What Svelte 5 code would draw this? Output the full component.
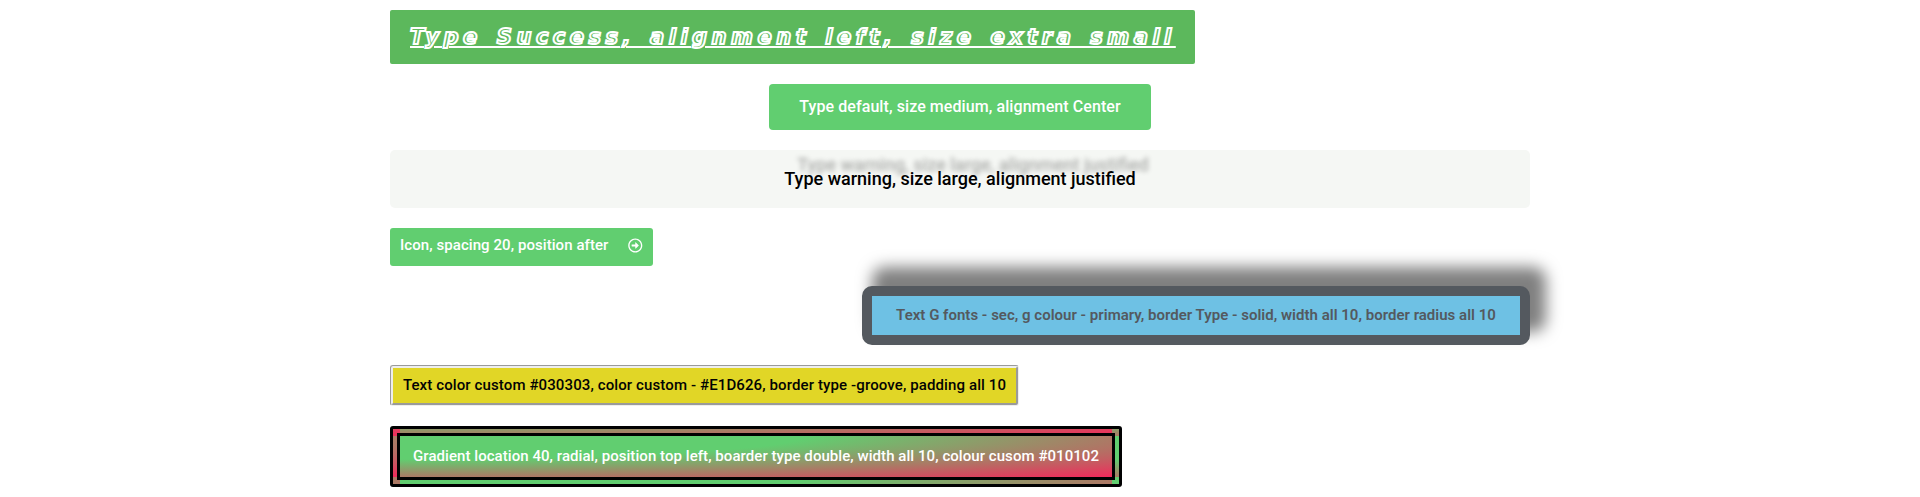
<script>
  const buttons = [
    { kind: 'success', align: 'left', text: 'Type Success, alignment left, size extra small' },
    { kind: 'medium', align: 'center', text: 'Type default, size medium, alignment Center' },
    { kind: 'warning', align: 'justify', text: 'Type warning, size large, alignment justified' },
    { kind: 'icon', align: 'left', text: 'Icon, spacing 20, position after', icon: true },
    { kind: 'solid', align: 'right', text: 'Text G fonts - sec, g colour - primary, border Type - solid, width all 10, border radius all 10' },
    { kind: 'groove', align: 'left', text: 'Text color custom #030303, color custom - #E1D626, border type -groove, padding all 10' },
    { kind: 'gradient', align: 'left', text: 'Gradient location 40, radial, position top left, boarder type double, width all 10, colour cusom #010102' }
  ];
</script>

<main>
  {#each buttons as b}
    <div class="row {b.align}">
      <a class="btn {b.kind}" href="#top">
        <span class="label">{b.text}</span>
        {#if b.icon}
          <svg viewBox="0 0 512 512" aria-hidden="true"><path fill="currentColor" d="M504 256C504 119 393 8 256 8S8 119 8 256s111 248 248 248 248-111 248-248zm-448 0c0-110.500 89.500-200 200-200s200 89.500 200 200-89.500 200-200 200S56 366.500 56 256zm72 20v-40c0-6.600 5.400-12 12-12h116v-67c0-10.700 12.900-16 20.500-8.500l99 99c4.700 4.700 4.700 12.300 0 17l-99 99c-7.600 7.600-20.500 2.200-20.500-8.500v-67H140c-6.600 0-12-5.400-12-12z"/></svg>
        {/if}
      </a>
    </div>
  {/each}
</main>

<style>
  :global(body) { background: #fff; overflow: hidden; }
  main {
    box-sizing: border-box;
    width: 1160px;
    margin: 0 auto;
    padding: 10px;
    display: flex;
    flex-direction: column;
    gap: 20px;
    font-family: Roboto, sans-serif;
  }
  .row { display: flex; }
  .center { justify-content: center; }
  .right { justify-content: flex-end; }
  .justify .btn { flex: 1; }
  .btn {
    box-sizing: border-box;
    display: flex;
    justify-content: center;
    color: #fff;
    background: #61ce70;
    font-size: 15px;
    font-weight: 500;
    line-height: 1;
    padding: 12px 24px;
    border-radius: 3px;
    text-decoration: none;
    white-space: nowrap;
  }
  .success {
    width: 805px;
    height: 54px;
    padding: 17px 20px;
    justify-content: flex-start;
    border-radius: 2px;
    background: #5cb85c;
    color: #fff;
    -webkit-text-fill-color: #5cb85c;
    font: italic 700 21px/20px "DejaVu Sans", sans-serif;
    letter-spacing: 4.5px;
    word-spacing: 3.2px;
    -webkit-text-stroke: 2px #fff;
  }
  .success .label {
    text-decoration: underline #fff;
    text-decoration-thickness: 2px;
    text-underline-offset: 2px;
  }
  .medium { width: 382px; font-size: 16px; letter-spacing: 0.08px; padding: 15px 30px; border-radius: 4px; }
  .warning {
    font-size: 18px;
    padding: 20px 40px;
    border-radius: 5px;
    background: #f5f7f4;
    color: #000;
    text-shadow: 13px -14px 5px rgba(0, 0, 0, 0.3);
  }
  .icon { width: 263px; height: 38px; padding: 10px; gap: 20px; letter-spacing: 0.07px; justify-content: space-between; }
  .icon svg { width: 15px; height: 15px; }
  .solid {
    width: 668px;
    border: 10px solid #54595f;
    border-radius: 10px;
    background: #6ec1e4;
    color: #54595f;
    font-weight: 600;
    letter-spacing: 0.013px;
    box-shadow: 13px -16px 15px 3px rgba(0, 0, 0, 0.5);
  }
  .groove {
    width: 629px;
    padding: 10px;
    border: 3px groove #eee;
    background: #e1d626;
    color: #030303;
    letter-spacing: 0.115px;
  }
  .gradient {
    width: 732px;
    padding: 13px;
    border: 10px double #010102;
    background: radial-gradient(at top left, #61ce70 40%, #f2295b 100%);
    letter-spacing: 0.058px;
  }
</style>
